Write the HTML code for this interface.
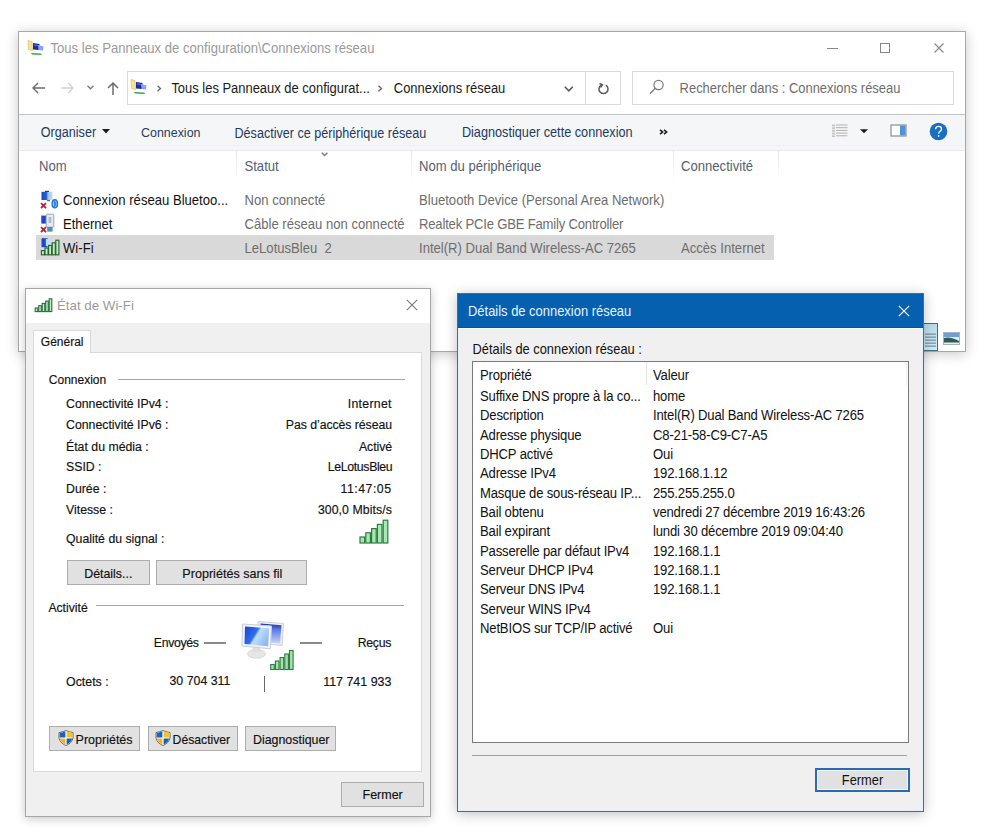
<!DOCTYPE html>
<html><head><meta charset="utf-8">
<style>
*{box-sizing:border-box}
html,body{margin:0;padding:0;width:999px;height:837px;overflow:hidden;background:#fff;font-family:"Liberation Sans",sans-serif;position:relative}
.a{position:absolute}
svg.a{overflow:visible}
.t{position:absolute;white-space:nowrap;line-height:1}
</style></head><body>
<div class="a" style="left:18px;top:31px;width:948px;height:321px;border:1px solid #a8a8a8;background:#fff;box-shadow:0 2px 12px rgba(0,0,0,.22)"></div>
<svg class="a" style="left:26px;top:39px" width="20" height="18" viewBox="0 0 20 18"><path d="M2 1.5 L6 2.5 L6.5 11.5 L2.5 10.5Z" fill="#f6e49a" stroke="#e0c060" stroke-width=".7"/><path d="M7 4 L13.5 5 L13 11 L7 10.5Z" fill="#1a2aa8"/><path d="M12 6 L17.5 7.5 L17 11.5 L12.5 11Z" fill="#8aa0f0"/><path d="M8 6 L12 6.5" stroke="#6a80e0" stroke-width="1"/><path d="M5 14 L15 14.5 L16 16 L6 15.5Z" fill="#3aa050"/></svg>
<div class="t" style="left:50.50px;top:41.71px;font-size:13.1px;color:#9a9a9a;;transform:scaleY(1.1);transform-origin:0 11.09px">Tous les Panneaux de configuration\Connexions réseau</div>
<div class="a" style="left:827px;top:48px;width:11px;height:1px;background:#888"></div>
<div class="a" style="left:880px;top:43px;width:10px;height:10px;border:1px solid #888"></div>
<svg class="a" style="left:934px;top:43px" width="10" height="10" viewBox="0 0 10 10"><path d="M0.5 0.5L9.5 9.5M9.5 0.5L0.5 9.5" stroke="#888" stroke-width="1.1"/></svg>
<svg class="a" style="left:32px;top:82px" width="14" height="12" viewBox="0 0 14 12"><path d="M1 6H13M6 1L1 6L6 11" fill="none" stroke="#6b6b6b" stroke-width="1.35"/></svg>
<svg class="a" style="left:60px;top:82px" width="14" height="12" viewBox="0 0 14 12"><path d="M1 6H13M8 1L13 6L8 11" fill="none" stroke="#d2d2d2" stroke-width="1.35"/></svg>
<svg class="a" style="left:87px;top:85px" width="7" height="5" viewBox="0 0 7 5"><path d="M0.5 0.8L3.5 3.8L6.5 0.8" fill="none" stroke="#777" stroke-width="1.3"/></svg>
<svg class="a" style="left:107px;top:82px" width="12" height="14" viewBox="0 0 12 14"><path d="M6 13V1M1 6L6 1L11 6" fill="none" stroke="#6b6b6b" stroke-width="1.5"/></svg>
<div class="a" style="left:127px;top:71px;width:494px;height:34px;border:1px solid #d9d9d9"></div>
<div class="a" style="left:585px;top:72px;width:1px;height:32px;background:#d9d9d9"></div>
<svg class="a" style="left:129px;top:78px" width="20" height="18" viewBox="0 0 20 18"><path d="M2 1.5 L6 2.5 L6.5 11.5 L2.5 10.5Z" fill="#f6e49a" stroke="#e0c060" stroke-width=".7"/><path d="M7 4 L13.5 5 L13 11 L7 10.5Z" fill="#1a2aa8"/><path d="M12 6 L17.5 7.5 L17 11.5 L12.5 11Z" fill="#8aa0f0"/><path d="M8 6 L12 6.5" stroke="#6a80e0" stroke-width="1"/><path d="M5 14 L15 14.5 L16 16 L6 15.5Z" fill="#3aa050"/></svg>
<svg class="a" style="left:156px;top:85px" width="6" height="7" viewBox="0 0 6 7"><path d="M1.5 0.8L4.5 3.5L1.5 6.2" fill="none" stroke="#666" stroke-width="1.3"/></svg>
<div class="t" style="left:171.40px;top:82.84px;font-size:12.95px;color:#1a1a1a;;transform:scaleY(1.1);transform-origin:0 10.96px">Tous les Panneaux de configurat...</div>
<svg class="a" style="left:377px;top:85px" width="6" height="7" viewBox="0 0 6 7"><path d="M1.5 0.8L4.5 3.5L1.5 6.2" fill="none" stroke="#666" stroke-width="1.3"/></svg>
<div class="t" style="left:393.80px;top:82.84px;font-size:12.95px;color:#1a1a1a;;transform:scaleY(1.1);transform-origin:0 10.96px">Connexions réseau</div>
<svg class="a" style="left:564px;top:86px" width="10" height="6" viewBox="0 0 10 6"><path d="M0.8 0.8L4.8 4.8L8.8 0.8" fill="none" stroke="#5a5a5a" stroke-width="1.6"/></svg>
<svg class="a" style="left:597px;top:82px" width="13" height="13" viewBox="0 0 13 13"><path d="M4.2 3.2 A4.5 4.5 0 1 0 8.8 3.2" fill="none" stroke="#5a5a5a" stroke-width="1.5"/><path d="M2.5 1.5 L5.5 2.8 L3.5 5.5" fill="none" stroke="#5a5a5a" stroke-width="1.4"/></svg>
<div class="a" style="left:632px;top:71px;width:322px;height:34px;border:1px solid #d9d9d9"></div>
<svg class="a" style="left:648px;top:78px" width="18" height="18" viewBox="0 0 18 18"><circle cx="10.5" cy="7" r="4.6" fill="none" stroke="#7a7a7a" stroke-width="1.2"/><path d="M7.2 10.3 L2 15.8" stroke="#7a7a7a" stroke-width="1.3"/></svg>
<div class="t" style="left:679.60px;top:82.84px;font-size:12.95px;color:#6d6d6d;;transform:scaleY(1.1);transform-origin:0 10.96px">Rechercher dans : Connexions réseau</div>
<div class="a" style="left:19px;top:114px;width:946px;height:1px;background:#c2c2c2"></div>
<div class="a" style="left:19px;top:115px;width:946px;height:36px;background:#f5f6f7"></div>
<div class="a" style="left:19px;top:145px;width:946px;height:1px;background:#eef0f2"></div>
<div class="a" style="left:19px;top:150px;width:946px;height:1px;background:#e9e9e9"></div>
<div class="t" style="left:40.80px;top:126.53px;font-size:12.6px;color:#1e3a5f;;transform:scaleY(1.1);transform-origin:0 10.67px">Organiser</div>
<svg class="a" style="left:102px;top:129px" width="8" height="5" viewBox="0 0 8 5"><path d="M0 0H8L4 4.5Z" fill="#1a1a2a"/></svg>
<div class="t" style="left:141.00px;top:127.46px;font-size:12.45px;color:#1e3a5f;;transform:scaleY(1.1);transform-origin:0 10.54px">Connexion</div>
<div class="t" style="left:234.50px;top:127.53px;font-size:12.6px;color:#1e3a5f;;transform:scaleY(1.1);transform-origin:0 10.67px">Désactiver ce périphérique réseau</div>
<div class="t" style="left:461.90px;top:127.45px;font-size:12.7px;color:#1e3a5f;;transform:scaleY(1.1);transform-origin:0 10.75px">Diagnostiquer cette connexion</div>
<svg class="a" style="left:658.5px;top:128.5px" width="10" height="7" viewBox="0 0 10 7"><path d="M1 0.9L3.6 3L1 5.1M5 0.9L7.6 3L5 5.1" fill="none" stroke="#1a1a1a" stroke-width="1.6"/></svg>
<svg class="a" style="left:831px;top:123px" width="18" height="15" viewBox="0 0 18 15"><rect x="1" y="1.5" width="3" height="1.8" fill="#c4c4c4"/><rect x="5" y="1.5" width="11.5" height="1" fill="#b0b0b0"/><rect x="1" y="4.2" width="3" height="1.8" fill="#c4c4c4"/><rect x="5" y="4.2" width="11.5" height="1" fill="#b0b0b0"/><rect x="1" y="6.9" width="3" height="1.8" fill="#c4c4c4"/><rect x="5" y="6.9" width="11.5" height="1" fill="#b0b0b0"/><rect x="1" y="9.600000000000001" width="3" height="1.8" fill="#c4c4c4"/><rect x="5" y="9.600000000000001" width="11.5" height="1" fill="#b0b0b0"/><rect x="1" y="12.3" width="3" height="1.8" fill="#c4c4c4"/><rect x="5" y="12.3" width="11.5" height="1" fill="#b0b0b0"/></svg>
<svg class="a" style="left:860px;top:129px" width="8" height="5" viewBox="0 0 8 5"><path d="M0 0.3H8L4 4.3Z" fill="#1a1a1a"/></svg>
<svg class="a" style="left:890px;top:124px" width="17" height="13" viewBox="0 0 17 13"><rect x="1" y="1" width="15" height="11" fill="#fff" stroke="#8c8c8c" stroke-width="1.2"/><rect x="10" y="1.6" width="5.4" height="9.8" fill="#4a94dc"/></svg>
<svg class="a" style="left:929px;top:122px" width="19" height="19" viewBox="0 0 19 19"><circle cx="9.5" cy="9.5" r="8.8" fill="#1a6ec0"/><path d="M6.6 7.2 Q6.6 4.3 9.6 4.3 Q12.5 4.3 12.5 6.9 Q12.5 8.5 10.8 9.5 Q9.6 10.2 9.6 11.8" fill="none" stroke="#fff" stroke-width="1.3"/><rect x="8.9" y="13.2" width="1.4" height="1.5" fill="#fff"/></svg>
<div class="a" style="left:236px;top:150px;width:1px;height:32px;background:linear-gradient(#e5e5e5,#fff)"></div>
<div class="a" style="left:411px;top:150px;width:1px;height:32px;background:linear-gradient(#e5e5e5,#fff)"></div>
<div class="a" style="left:673px;top:150px;width:1px;height:32px;background:linear-gradient(#e5e5e5,#fff)"></div>
<div class="a" style="left:778px;top:150px;width:1px;height:32px;background:linear-gradient(#e5e5e5,#fff)"></div>
<svg class="a" style="left:321px;top:151.5px" width="8" height="5" viewBox="0 0 8 5"><path d="M0.8 0.8L3.6 3.6L6.4 0.8" fill="none" stroke="#7a7a7a" stroke-width="1.4"/></svg>
<div class="t" style="left:39.00px;top:159.91px;font-size:13.1px;color:#55606e;;transform:scaleY(1.1);transform-origin:0 11.09px">Nom</div>
<div class="t" style="left:244.50px;top:159.91px;font-size:13.1px;color:#55606e;;transform:scaleY(1.1);transform-origin:0 11.09px">Statut</div>
<div class="t" style="left:419.00px;top:159.91px;font-size:13.1px;color:#55606e;;transform:scaleY(1.1);transform-origin:0 11.09px">Nom du périphérique</div>
<div class="t" style="left:681.00px;top:159.91px;font-size:13.1px;color:#55606e;;transform:scaleY(1.1);transform-origin:0 11.09px">Connectivité</div>
<div class="a" style="left:36px;top:235px;width:738px;height:25px;background:#d9d9d9"></div>
<div class="t" style="left:63.00px;top:193.91px;font-size:13.1px;color:#111;;transform:scaleY(1.1);transform-origin:0 11.09px">Connexion réseau Bluetoo...</div>
<div class="t" style="left:244.50px;top:193.91px;font-size:13.1px;color:#6d6d6d;;transform:scaleY(1.1);transform-origin:0 11.09px">Non connecté</div>
<div class="t" style="left:419.00px;top:193.91px;font-size:13.1px;color:#6d6d6d;;transform:scaleY(1.1);transform-origin:0 11.09px">Bluetooth Device (Personal Area Network)</div>
<div class="t" style="left:63.00px;top:217.91px;font-size:13.1px;color:#111;;transform:scaleY(1.1);transform-origin:0 11.09px">Ethernet</div>
<div class="t" style="left:244.50px;top:217.91px;font-size:13.1px;color:#6d6d6d;;transform:scaleY(1.1);transform-origin:0 11.09px">Câble réseau non connecté</div>
<div class="t" style="left:419.00px;top:217.91px;font-size:13.1px;color:#6d6d6d;letter-spacing:-0.2px;transform:scaleY(1.1);transform-origin:0 11.09px">Realtek PCIe GBE Family Controller</div>
<div class="t" style="left:63.00px;top:241.91px;font-size:13.1px;color:#111;;transform:scaleY(1.1);transform-origin:0 11.09px">Wi-Fi</div>
<div class="t" style="left:244.50px;top:241.91px;font-size:13.1px;color:#6d6d6d;;transform:scaleY(1.1);transform-origin:0 11.09px">LeLotusBleu&nbsp; 2</div>
<div class="t" style="left:419.00px;top:241.91px;font-size:13.1px;color:#6d6d6d;;transform:scaleY(1.1);transform-origin:0 11.09px">Intel(R) Dual Band Wireless-AC 7265</div>
<div class="t" style="left:681.00px;top:241.91px;font-size:13.1px;color:#6d6d6d;;transform:scaleY(1.1);transform-origin:0 11.09px">Accès Internet</div>
<svg class="a" style="left:36px;top:186px" width="26" height="26" viewBox="0 0 26 26"><defs><linearGradient id="mon" x1="0" y1="0" x2="1" y2="0"><stop offset="0" stop-color="#1a48c0"/><stop offset=".45" stop-color="#2a62d8"/><stop offset=".6" stop-color="#9cc4f2"/><stop offset="1" stop-color="#c8dcf8"/></linearGradient></defs><rect x="5.5" y="5.8" width="11" height="8.2" fill="url(#mon)"/><rect x="9" y="4.8" width="4" height="1.2" fill="#2a3a7a"/><rect x="11" y="14" width="3" height="1.2" fill="#5a6a8a"/><path d="M5 17.2 L10 22.2 M10 17.2 L5 22.2" stroke="#b81c2c" stroke-width="1.7"/><ellipse cx="18.8" cy="17.8" rx="3.4" ry="4.7" fill="#1f74cc"/><ellipse cx="18.8" cy="17.8" rx="2" ry="3.4" fill="#7fd0f6"/><path d="M17.6 15.2 L20 16.8 L18.8 17.8 L20 18.8 L17.6 20.4 M18.6 14.6 V21" fill="none" stroke="#1f74cc" stroke-width=".8"/></svg>
<svg class="a" style="left:36px;top:210px" width="26" height="26" viewBox="0 0 26 26"><defs><linearGradient id="mon" x1="0" y1="0" x2="1" y2="0"><stop offset="0" stop-color="#1a48c0"/><stop offset=".45" stop-color="#2a62d8"/><stop offset=".6" stop-color="#9cc4f2"/><stop offset="1" stop-color="#c8dcf8"/></linearGradient></defs><rect x="5.3" y="5.6" width="5" height="8" fill="#1f48c0"/><rect x="10.2" y="4.2" width="7.6" height="13" rx="1" fill="#e6ecf2" stroke="#98a4b4" stroke-width="1"/><rect x="12.6" y="7" width="2.8" height="6" fill="#b0bccc"/><rect x="11.2" y="17" width="5.4" height="4.6" fill="#4a90b8"/><path d="M5 17.2 L10 22.2 M10 17.2 L5 22.2" stroke="#b81c2c" stroke-width="1.7"/></svg>
<svg class="a" style="left:36px;top:234px" width="26" height="26" viewBox="0 0 26 26"><defs><linearGradient id="mon" x1="0" y1="0" x2="1" y2="0"><stop offset="0" stop-color="#1a48c0"/><stop offset=".45" stop-color="#2a62d8"/><stop offset=".6" stop-color="#9cc4f2"/><stop offset="1" stop-color="#c8dcf8"/></linearGradient></defs><rect x="5.5" y="4.2" width="6" height="9" fill="#1f48c8"/><rect x="9.8" y="5" width="4.5" height="7" fill="#b8e0f8"/><rect x="5.4" y="16.6" width="3.1" height="4.2" fill="#b6f0bc" stroke="#2c5a30" stroke-width="1.1"/><rect x="9.0" y="14.000000000000002" width="3.1" height="6.800000000000001" fill="#b6f0bc" stroke="#2c5a30" stroke-width="1.1"/><rect x="12.600000000000001" y="11.400000000000002" width="3.1" height="9.4" fill="#b6f0bc" stroke="#2c5a30" stroke-width="1.1"/><rect x="16.200000000000003" y="8.8" width="3.1" height="12.0" fill="#b6f0bc" stroke="#2c5a30" stroke-width="1.1"/><rect x="19.8" y="6.200000000000001" width="3.1" height="14.600000000000001" fill="#b6f0bc" stroke="#2c5a30" stroke-width="1.1"/></svg>
<div class="a" style="left:923px;top:323px;width:15px;height:28px;background:linear-gradient(#b8dcea,#d4ecf8);border:1px solid #3f6f7f"></div>
<svg class="a" style="left:924px;top:332px" width="13" height="16" viewBox="0 0 13 16"><rect x="1" y="1.5" width="11" height="1.3" fill="#7a96aa"/><rect x="1" y="4.5" width="11" height="1.3" fill="#7a96aa"/><rect x="1" y="7.5" width="11" height="1.3" fill="#7a96aa"/><rect x="1" y="10.5" width="11" height="1.3" fill="#7a96aa"/><rect x="1" y="13.5" width="11" height="1.3" fill="#7a96aa"/></svg>
<svg class="a" style="left:943px;top:332px" width="17" height="13" viewBox="0 0 17 13"><rect x="0.5" y="0.5" width="16" height="12" fill="#e4eef6" stroke="#a8b4bc" stroke-width="1"/><rect x="1" y="1" width="15" height="4" fill="#6f9ee0"/><path d="M1 6 Q7 4 16 9 L16 10.5 L1 10.5Z" fill="#2f5a58"/></svg>
<div class="a" style="left:25px;top:288px;width:406px;height:529px;border:1px solid #a6a6a6;background:#f0f0f0;box-shadow:0 2px 9px rgba(0,0,0,.22)"></div>
<div class="a" style="left:26px;top:289px;width:404px;height:34px;background:#fff"></div>
<svg class="a" style="left:34px;top:297px" width="19" height="16" viewBox="0 0 19 16"><rect x="1.2" y="11.0" width="2.6" height="3.6" fill="#b9f0c4" stroke="#2c6b3a" stroke-width="1.1"/><rect x="4.7" y="8.7" width="2.6" height="5.9" fill="#b9f0c4" stroke="#2c6b3a" stroke-width="1.1"/><rect x="8.2" y="6.4" width="2.6" height="8.2" fill="#b9f0c4" stroke="#2c6b3a" stroke-width="1.1"/><rect x="11.7" y="4.1000000000000005" width="2.6" height="10.5" fill="#b9f0c4" stroke="#2c6b3a" stroke-width="1.1"/><rect x="15.2" y="1.8000000000000007" width="2.6" height="12.799999999999999" fill="#b9f0c4" stroke="#2c6b3a" stroke-width="1.1"/></svg>
<div class="t" style="left:57.00px;top:299.24px;font-size:13.3px;color:#9a9a9a;">État de Wi-Fi</div>
<svg class="a" style="left:406px;top:299px" width="12" height="12" viewBox="0 0 12 12"><path d="M0.8 0.8L11.2 11.2M11.2 0.8L0.8 11.2" stroke="#777" stroke-width="1.1"/></svg>
<div class="a" style="left:33px;top:352px;width:389px;height:420px;background:#fff;border:1px solid #d9d9d9"></div>
<div class="a" style="left:33px;top:330px;width:58px;height:23px;background:#fff;border:1px solid #d9d9d9;border-bottom:none"></div>
<div class="t" style="left:40.80px;top:336.14px;font-size:12.0px;color:#111;-webkit-text-stroke:0.15px #111">Général</div>
<div class="t" style="left:48.80px;top:374.24px;font-size:12.0px;color:#111;-webkit-text-stroke:0.15px #111">Connexion</div>
<div class="a" style="left:118px;top:379px;width:287px;height:1px;background:#a6a6a6"></div>
<div class="t" style="left:66.00px;top:397.79px;font-size:12.3px;color:#111;-webkit-text-stroke:0.15px #111">Connectivité IPv4 :</div>
<div class="t" style="right:607.28px;top:397.79px;font-size:12.3px;color:#111;-webkit-text-stroke:0.15px #111;letter-spacing:0.28px">Internet</div>
<div class="t" style="left:66.00px;top:419.39px;font-size:12.3px;color:#111;-webkit-text-stroke:0.15px #111">Connectivité IPv6 :</div>
<div class="t" style="right:606.94px;top:419.39px;font-size:12.3px;color:#111;-webkit-text-stroke:0.15px #111;letter-spacing:-0.06px">Pas d’accès réseau</div>
<div class="t" style="left:66.00px;top:440.69px;font-size:12.3px;color:#111;-webkit-text-stroke:0.15px #111">État du média :</div>
<div class="t" style="right:606.95px;top:440.69px;font-size:12.3px;color:#111;-webkit-text-stroke:0.15px #111;letter-spacing:-0.05px">Activé</div>
<div class="t" style="left:66.00px;top:461.49px;font-size:12.3px;color:#111;-webkit-text-stroke:0.15px #111">SSID :</div>
<div class="t" style="right:606.65px;top:461.49px;font-size:12.3px;color:#111;-webkit-text-stroke:0.15px #111;letter-spacing:-0.35px">LeLotusBleu</div>
<div class="t" style="left:66.00px;top:482.79px;font-size:12.3px;color:#111;-webkit-text-stroke:0.15px #111">Durée :</div>
<div class="t" style="right:607.50px;top:482.79px;font-size:12.3px;color:#111;-webkit-text-stroke:0.15px #111;letter-spacing:0.5px">11:47:05</div>
<div class="t" style="left:66.00px;top:504.29px;font-size:12.3px;color:#111;-webkit-text-stroke:0.15px #111">Vitesse :</div>
<div class="t" style="right:607.07px;top:504.29px;font-size:12.3px;color:#111;-webkit-text-stroke:0.15px #111;letter-spacing:0.07px">300,0 Mbits/s</div>
<div class="t" style="left:66.00px;top:532.79px;font-size:12.3px;color:#111;-webkit-text-stroke:0.15px #111">Qualité du signal :</div>
<svg class="a" style="left:358px;top:518px" width="33" height="27" viewBox="0 0 33 27"><rect x="2.0" y="19.0" width="4.6" height="6.0" fill="#a8e8b4" stroke="#2f7a3f" stroke-width="1.2"/><rect x="7.8" y="14.8" width="4.6" height="10.2" fill="#a8e8b4" stroke="#2f7a3f" stroke-width="1.2"/><rect x="13.6" y="10.6" width="4.6" height="14.4" fill="#a8e8b4" stroke="#2f7a3f" stroke-width="1.2"/><rect x="19.4" y="6.399999999999999" width="4.6" height="18.6" fill="#a8e8b4" stroke="#2f7a3f" stroke-width="1.2"/><rect x="25.2" y="2.1999999999999993" width="4.6" height="22.8" fill="#a8e8b4" stroke="#2f7a3f" stroke-width="1.2"/></svg>
<div class="a" style="left:67px;top:560px;width:83px;height:25px;background:#e1e1e1;border:1px solid #adadad"></div>
<div class="t" style="left:84.20px;top:567.80px;font-size:12.4px;color:#111;-webkit-text-stroke:0.15px #111">Détails...</div>
<div class="a" style="left:156px;top:560px;width:151px;height:25px;background:#e1e1e1;border:1px solid #adadad"></div>
<div class="t" style="left:182.30px;top:567.63px;font-size:12.6px;color:#111;-webkit-text-stroke:0.15px #111">Propriétés sans fil</div>
<div class="t" style="left:48.40px;top:602.17px;font-size:12.2px;color:#111;-webkit-text-stroke:0.15px #111">Activité</div>
<div class="a" style="left:96px;top:605px;width:308px;height:1px;background:#a6a6a6"></div>
<div class="t" style="left:153.80px;top:636.89px;font-size:12.3px;color:#111;-webkit-text-stroke:0.15px #111;letter-spacing:-0.33px">Envoyés</div>
<div class="a" style="left:204px;top:642px;width:22px;height:2px;background:#8a8a8a"></div>
<div class="a" style="left:300px;top:642px;width:22px;height:2px;background:#8a8a8a"></div>
<div class="t" style="right:607.75px;top:636.89px;font-size:12.3px;color:#111;-webkit-text-stroke:0.15px #111;letter-spacing:-0.25px">Reçus</div>
<svg class="a" style="left:235px;top:615px" width="65" height="60" viewBox="0 0 65 60"><defs><linearGradient id="bk" x1="0" y1="0" x2="0" y2="1"><stop offset="0" stop-color="#1c2f9a"/><stop offset=".3" stop-color="#5a78e8"/><stop offset="1" stop-color="#c8d4fa"/></linearGradient><linearGradient id="fr" x1="0" y1="0.1" x2="1" y2="0.6"><stop offset="0" stop-color="#1747d8"/><stop offset=".45" stop-color="#2f6ef0"/><stop offset=".55" stop-color="#bfe0fb"/><stop offset="1" stop-color="#8fb8f4"/></linearGradient></defs><path d="M23 6.5 L48.5 8.5 L47 30.5 L24 28Z" fill="#eef0f4" stroke="#cdd2dc" stroke-width="1"/><path d="M25.5 8.5 L46.5 10.2 L45 28.5 L26 26.5Z" fill="url(#bk)"/><ellipse cx="21.5" cy="38.8" rx="9" ry="4.4" fill="#e6e6e6" stroke="#d2d2d2" stroke-width=".8"/><path d="M18 31 L25 31 L26 37 L17 37Z" fill="#dedede"/><path d="M7.5 9 L36.5 11 L35.5 33.8 L7 31Z" fill="#f2f3f6" stroke="#c9ced6" stroke-width="1"/><path d="M10 11.5 L34 13.2 L33.2 31.3 L9.5 29Z" fill="url(#fr)"/></svg>
<svg class="a" style="left:269px;top:650px" width="27" height="21" viewBox="0 0 27 21"><rect x="1.7" y="14.5" width="3.6" height="5.0" fill="#a2e2ae" stroke="#2f7a3f" stroke-width="1.1"/><rect x="6.4" y="11.0" width="3.6" height="8.5" fill="#a2e2ae" stroke="#2f7a3f" stroke-width="1.1"/><rect x="11.1" y="7.5" width="3.6" height="12.0" fill="#a2e2ae" stroke="#2f7a3f" stroke-width="1.1"/><rect x="15.8" y="4.0" width="3.6" height="15.5" fill="#a2e2ae" stroke="#2f7a3f" stroke-width="1.1"/><rect x="20.5" y="0.5" width="3.6" height="19.0" fill="#a2e2ae" stroke="#2f7a3f" stroke-width="1.1"/></svg>
<div class="t" style="left:66.00px;top:675.50px;font-size:12.4px;color:#111;-webkit-text-stroke:0.15px #111">Octets :</div>
<div class="t" style="left:169.50px;top:675.45px;font-size:12.35px;color:#111;-webkit-text-stroke:0.15px #111">30 704 311</div>
<div class="a" style="left:264px;top:676px;width:1px;height:16px;background:#6a6a6a"></div>
<div class="t" style="right:607.60px;top:675.66px;font-size:12.45px;color:#111;-webkit-text-stroke:0.15px #111">117 741 933</div>
<div class="a" style="left:49px;top:726px;width:91px;height:25px;background:#e1e1e1;border:1px solid #adadad"></div>
<div class="t" style="left:75.60px;top:733.82px;font-size:12.5px;color:#111;-webkit-text-stroke:0.15px #111">Propriétés</div>
<svg class="a" style="left:57.5px;top:730px" width="16" height="16" viewBox="0 0 16 16"><path d="M1 2.6 Q4.8 1.8 8 0.6 Q11.2 1.8 15 2.6 L15 8 Q14 13 8 15.6 Q2 13 1 8Z" fill="#fff" stroke="#5a4a30" stroke-width=".8"/><path d="M1.7 3.1 L7.4 1.6 L7.4 7.4 L1.7 7.4Z" fill="#1464c8"/><path d="M8.6 1.6 L14.3 3.1 L14.3 7.4 L8.6 7.4Z" fill="#f8c020"/><path d="M1.8 8.6 L7.4 8.6 L7.4 14.6 Q2.8 12.6 1.8 8.6Z" fill="#f6b030"/><path d="M8.6 8.6 L14.2 8.6 Q13.2 12.6 8.6 14.6Z" fill="#1460c0"/></svg>
<div class="a" style="left:148px;top:726px;width:90px;height:25px;background:#e1e1e1;border:1px solid #adadad"></div>
<div class="t" style="left:172.60px;top:734.07px;font-size:12.2px;color:#111;-webkit-text-stroke:0.15px #111">Désactiver</div>
<svg class="a" style="left:154.8px;top:730px" width="16" height="16" viewBox="0 0 16 16"><path d="M1 2.6 Q4.8 1.8 8 0.6 Q11.2 1.8 15 2.6 L15 8 Q14 13 8 15.6 Q2 13 1 8Z" fill="#fff" stroke="#5a4a30" stroke-width=".8"/><path d="M1.7 3.1 L7.4 1.6 L7.4 7.4 L1.7 7.4Z" fill="#1464c8"/><path d="M8.6 1.6 L14.3 3.1 L14.3 7.4 L8.6 7.4Z" fill="#f8c020"/><path d="M1.8 8.6 L7.4 8.6 L7.4 14.6 Q2.8 12.6 1.8 8.6Z" fill="#f6b030"/><path d="M8.6 8.6 L14.2 8.6 Q13.2 12.6 8.6 14.6Z" fill="#1460c0"/></svg>
<div class="a" style="left:245px;top:726px;width:91px;height:25px;background:#e1e1e1;border:1px solid #adadad"></div>
<div class="t" style="left:253.00px;top:733.90px;font-size:12.4px;color:#111;-webkit-text-stroke:0.15px #111">Diagnostiquer</div>
<div class="a" style="left:341px;top:782px;width:83px;height:25px;background:#e1e1e1;border:1px solid #adadad"></div>
<div class="t" style="left:362.50px;top:789.22px;font-size:12.5px;color:#111;-webkit-text-stroke:0.15px #111">Fermer</div>
<div class="a" style="left:457px;top:293px;width:467px;height:519px;border:1px solid #3a6fa6;background:#f0f0f0;box-shadow:0 2px 12px rgba(0,0,0,.25), inset 0 0 0 1px #e4f0fb"></div>
<div class="a" style="left:458px;top:294px;width:465px;height:34px;background:#0560b0"></div>
<div class="a" style="left:458px;top:327px;width:465px;height:1px;background:#0b5196"></div>
<div class="a" style="left:458px;top:328px;width:465px;height:1px;background:#f8fbff"></div>
<div class="t" style="left:468.00px;top:305.74px;font-size:12.95px;color:#eaf4ff;;transform:scaleY(1.07);transform-origin:0 10.96px">Détails de connexion réseau</div>
<svg class="a" style="left:898px;top:305px" width="12" height="12" viewBox="0 0 12 12"><path d="M0.8 0.8L11.2 11.2M11.2 0.8L0.8 11.2" stroke="#fff" stroke-width="1.2"/></svg>
<div class="t" style="left:472.60px;top:344.32px;font-size:12.85px;color:#111;;transform:scaleY(1.07);transform-origin:0 10.88px">Détails de connexion réseau :</div>
<div class="a" style="left:472px;top:361px;width:437px;height:382px;background:#fff;border:1px solid #7a7a7a"></div>
<div class="a" style="left:646px;top:362px;width:1px;height:23px;background:#e5e5e5"></div>
<div class="a" style="left:906px;top:362px;width:1px;height:23px;background:#f0f0f0"></div>
<div class="t" style="left:480.00px;top:368.51px;font-size:13.1px;color:#111;letter-spacing:-0.17px;transform:scaleY(1.07);transform-origin:0 11.09px">Propriété</div>
<div class="t" style="left:653.00px;top:368.51px;font-size:13.1px;color:#111;letter-spacing:-0.17px;transform:scaleY(1.07);transform-origin:0 11.09px">Valeur</div>
<div class="t" style="left:480.00px;top:390.01px;font-size:13.1px;color:#111;letter-spacing:-0.17px;transform:scaleY(1.07);transform-origin:0 11.09px">Suffixe DNS propre à la co...</div>
<div class="t" style="left:653.00px;top:390.01px;font-size:13.1px;color:#111;letter-spacing:-0.17px;transform:scaleY(1.07);transform-origin:0 11.09px">home</div>
<div class="t" style="left:480.00px;top:409.34px;font-size:13.1px;color:#111;letter-spacing:-0.17px;transform:scaleY(1.07);transform-origin:0 11.09px">Description</div>
<div class="t" style="left:653.00px;top:409.34px;font-size:13.1px;color:#111;letter-spacing:-0.17px;transform:scaleY(1.07);transform-origin:0 11.09px">Intel(R) Dual Band Wireless-AC 7265</div>
<div class="t" style="left:480.00px;top:428.67px;font-size:13.1px;color:#111;letter-spacing:-0.17px;transform:scaleY(1.07);transform-origin:0 11.09px">Adresse physique</div>
<div class="t" style="left:653.00px;top:428.67px;font-size:13.1px;color:#111;letter-spacing:-0.17px;transform:scaleY(1.07);transform-origin:0 11.09px">C8-21-58-C9-C7-A5</div>
<div class="t" style="left:480.00px;top:448.00px;font-size:13.1px;color:#111;letter-spacing:-0.17px;transform:scaleY(1.07);transform-origin:0 11.09px">DHCP activé</div>
<div class="t" style="left:653.00px;top:448.00px;font-size:13.1px;color:#111;letter-spacing:-0.17px;transform:scaleY(1.07);transform-origin:0 11.09px">Oui</div>
<div class="t" style="left:480.00px;top:467.33px;font-size:13.1px;color:#111;letter-spacing:-0.17px;transform:scaleY(1.07);transform-origin:0 11.09px">Adresse IPv4</div>
<div class="t" style="left:653.00px;top:467.33px;font-size:13.1px;color:#111;letter-spacing:-0.17px;transform:scaleY(1.07);transform-origin:0 11.09px">192.168.1.12</div>
<div class="t" style="left:480.00px;top:486.66px;font-size:13.1px;color:#111;letter-spacing:-0.17px;transform:scaleY(1.07);transform-origin:0 11.09px">Masque de sous-réseau IP...</div>
<div class="t" style="left:653.00px;top:486.66px;font-size:13.1px;color:#111;letter-spacing:-0.17px;transform:scaleY(1.07);transform-origin:0 11.09px">255.255.255.0</div>
<div class="t" style="left:480.00px;top:505.99px;font-size:13.1px;color:#111;letter-spacing:-0.17px;transform:scaleY(1.07);transform-origin:0 11.09px">Bail obtenu</div>
<div class="t" style="left:653.00px;top:505.99px;font-size:13.1px;color:#111;letter-spacing:-0.17px;transform:scaleY(1.07);transform-origin:0 11.09px">vendredi 27 décembre 2019 16:43:26</div>
<div class="t" style="left:480.00px;top:525.32px;font-size:13.1px;color:#111;letter-spacing:-0.17px;transform:scaleY(1.07);transform-origin:0 11.09px">Bail expirant</div>
<div class="t" style="left:653.00px;top:525.32px;font-size:13.1px;color:#111;letter-spacing:-0.17px;transform:scaleY(1.07);transform-origin:0 11.09px">lundi 30 décembre 2019 09:04:40</div>
<div class="t" style="left:480.00px;top:544.65px;font-size:13.1px;color:#111;letter-spacing:-0.17px;transform:scaleY(1.07);transform-origin:0 11.09px">Passerelle par défaut IPv4</div>
<div class="t" style="left:653.00px;top:544.65px;font-size:13.1px;color:#111;letter-spacing:-0.17px;transform:scaleY(1.07);transform-origin:0 11.09px">192.168.1.1</div>
<div class="t" style="left:480.00px;top:563.98px;font-size:13.1px;color:#111;letter-spacing:-0.17px;transform:scaleY(1.07);transform-origin:0 11.09px">Serveur DHCP IPv4</div>
<div class="t" style="left:653.00px;top:563.98px;font-size:13.1px;color:#111;letter-spacing:-0.17px;transform:scaleY(1.07);transform-origin:0 11.09px">192.168.1.1</div>
<div class="t" style="left:480.00px;top:583.31px;font-size:13.1px;color:#111;letter-spacing:-0.17px;transform:scaleY(1.07);transform-origin:0 11.09px">Serveur DNS IPv4</div>
<div class="t" style="left:653.00px;top:583.31px;font-size:13.1px;color:#111;letter-spacing:-0.17px;transform:scaleY(1.07);transform-origin:0 11.09px">192.168.1.1</div>
<div class="t" style="left:480.00px;top:602.64px;font-size:13.1px;color:#111;letter-spacing:-0.17px;transform:scaleY(1.07);transform-origin:0 11.09px">Serveur WINS IPv4</div>
<div class="t" style="left:480.00px;top:621.97px;font-size:13.1px;color:#111;letter-spacing:-0.17px;transform:scaleY(1.07);transform-origin:0 11.09px">NetBIOS sur TCP/IP activé</div>
<div class="t" style="left:653.00px;top:621.97px;font-size:13.1px;color:#111;letter-spacing:-0.17px;transform:scaleY(1.07);transform-origin:0 11.09px">Oui</div>
<div class="a" style="left:472px;top:755px;width:435px;height:1px;background:#a0a0a0"></div>
<div class="a" style="left:815px;top:768px;width:95px;height:24px;background:#e1e1e1;border:2px solid #2a6ab0;box-shadow:inset 0 0 0 1px #eef5fc"></div>
<div class="t" style="left:841.80px;top:774.82px;font-size:12.85px;color:#111;;transform:scaleY(1.07);transform-origin:0 10.88px">Fermer</div>
</body></html>
